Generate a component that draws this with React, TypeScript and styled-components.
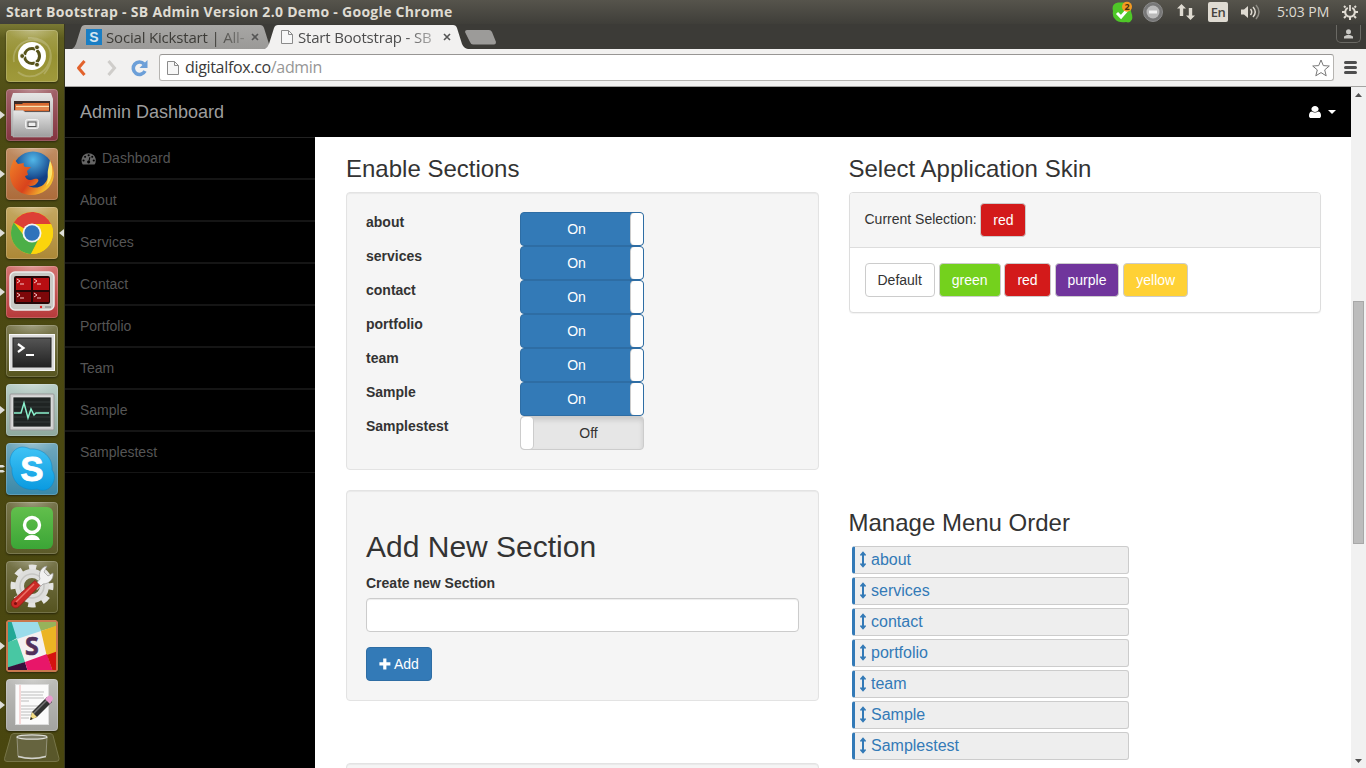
import React from 'react';
import styled, { createGlobalStyle } from 'styled-components';

const GlobalStyle = createGlobalStyle`
  *, *::before, *::after { box-sizing: border-box; }
  body {
    margin: 0;
    overflow: hidden;
    font-family: "Liberation Sans", Arial, sans-serif;
    font-size: 14px;
    line-height: 20px;
    color: #333;
  }
  svg { display: block; flex: none; }
`;

const systemFont = '"Open Sans", "Noto Sans", sans-serif';

/* ---------- desktop ---------- */

const Desktop = styled.div`
  width: 1366px;
  height: 768px;
  display: flex;
  flex-direction: column;
  overflow: hidden;
  background: #fff;
`;

const TopPanel = styled.header`
  height: 24px;
  flex: none;
  display: flex;
  align-items: center;
  justify-content: space-between;
  padding: 0 8px 0 6px;
  background: linear-gradient(#56544c, #3f3e39);
  color: #dfdbd2;
  font-family: ${systemFont};
`;

const WindowTitle = styled.div`
  font-size: 14px;
  font-weight: 700;
  letter-spacing: 0.29px;
  white-space: nowrap;
`;

const Indicators = styled.div`
  display: flex;
  align-items: center;
  height: 24px;
`;

const Indicator = styled.div<{ $left: number }>`
  margin-left: ${(p) => p.$left}px;
`;

const LanguageBadge = styled.div`
  width: 20px;
  height: 20px;
  margin-left: 13px;
  border-radius: 2px;
  background: #dfdbd2;
  color: #45443e;
  font-size: 13px;
  font-weight: 600;
  letter-spacing: -0.5px;
  line-height: 21px;
  text-align: center;
`;

const Clock = styled.div`
  width: 53px;
  margin-left: 16px;
  font-size: 14px;
  white-space: nowrap;
`;

const Workspace = styled.div`
  flex: 1;
  min-height: 0;
  display: flex;
`;

/* ---------- launcher ---------- */

const Launcher = styled.aside`
  width: 65px;
  flex: none;
  display: flex;
  flex-direction: column;
  gap: 7px;
  padding: 6px 0 0 0;
  background: linear-gradient(#7a7934 0, #5d5c1e 14px, #4c4a13 90px, #49460f 100%);
  border-right: 1px solid #37361f;
`;

const LauncherItem = styled.div`
  height: 52px;
  flex: none;
  display: flex;
  align-items: center;
`;

const Marker = styled.div`
  width: 6px;
  flex: none;
`;

const Tile = styled.div<{ $bg: string }>`
  width: 52px;
  height: 52px;
  border-radius: 4px;
  overflow: hidden;
  background: radial-gradient(ellipse 24px 12px at 50% 0, rgba(255, 255, 255, 0.28), rgba(255, 255, 255, 0)), ${(p) => p.$bg};
  box-shadow: inset 0 0 0 1px rgba(255, 255, 255, 0.18), 0 1px 2px rgba(0, 0, 0, 0.45);
`;

const Trash = styled.div`
  margin: -5px 0 0 4px;
`;

/* ---------- browser ---------- */

const Browser = styled.section`
  flex: 1;
  min-width: 0;
  display: flex;
  flex-direction: column;
`;

const TabStrip = styled.div`
  height: 25px;
  flex: none;
  display: flex;
  align-items: flex-end;
  justify-content: space-between;
  padding: 0 5px 0 7px;
  background: #3c3b37;
`;

const Tabs = styled.div`
  display: flex;
  align-items: flex-end;
`;

const Tab = styled.div<{ $active?: boolean }>`
  width: 206px;
  height: 24px;
  margin-left: ${(p) => (p.$active ? '-13px' : '0')};
  padding: 0 15px 1px ${(p) => (p.$active ? '16px' : '14px')};
  display: flex;
  align-items: center;
  z-index: ${(p) => (p.$active ? 1 : 0)};
  background: ${(p) => (p.$active ? '#f2f1f0' : 'linear-gradient(#a8a7a5, #9a9997)')};
  clip-path: path('M0 24 Q2.5 23 4 19 L9 3 Q10 0 13 0 L188 0 Q191 0 192 3 L197 19 Q199 23.5 203 24 Z');
  font-family: ${systemFont};
  font-size: 15px;
  color: ${(p) => (p.$active ? '#4c4c4c' : '#3c3b37')};
`;

const TabTitle = styled.div<{ $active?: boolean }>`
  width: 138px;
  margin-left: ${(p) => (p.$active ? 5 : 4)}px;
  overflow: hidden;
  white-space: nowrap;
  letter-spacing: -0.18px;
  mask-image: linear-gradient(90deg, #000 78%, rgba(0, 0, 0, 0.3) 100%);
`;

const TabClose = styled.div`
  margin-left: 7px;
`;

const NewTab = styled.div`
  width: 31px;
  height: 15px;
  margin: 0 0 4px -6px;
  background: #9c9b99;
  clip-path: path('M2 0 L24 0 Q26 0 27 2 L31 12 Q31 14.500 29 14.500 L8 14.500 Q6 14.500 5 12 L0 2 Q0 0 2 0 Z');
`;

const ProfileButton = styled.div`
  width: 25px;
  height: 18px;
  margin-bottom: 6px;
  display: flex;
  align-items: center;
  justify-content: center;
  border: 1px solid #6a6964;
  border-top: 0;
  border-radius: 0 0 5px 5px;
`;

const Toolbar = styled.div`
  height: 38px;
  flex: none;
  display: flex;
  align-items: center;
  padding: 0 9px 0 10px;
  background: #f2f1f0;
  border-bottom: 1px solid #a5a4a2;
`;

const NavIcon = styled.div<{ $left?: number }>`
  margin-left: ${(p) => p.$left ?? 0}px;
`;

const Omnibox = styled.div`
  flex: 1;
  height: 27px;
  margin: 0 10px 0 11px;
  padding: 0 3px 0 7px;
  display: flex;
  align-items: center;
  border: 1px solid #b6b4b1;
  border-top: 1px solid #989694;
  border-radius: 3px;
  background: #fff;
`;

const Address = styled.div`
  flex: 1;
  margin: -1px 0 0 6px;
  font-family: ${systemFont};
  font-size: 16px;
  letter-spacing: -0.33px;
  color: #3a3a3a;
  span { color: #969696; }
`;

const Viewport = styled.div`
  flex: 1;
  min-height: 0;
  display: flex;
`;

const Page = styled.div`
  flex: 1;
  min-width: 0;
  display: flex;
  flex-direction: column;
`;

const Scrollbar = styled.div`
  width: 15px;
  display: flex;
  flex-direction: column;
  align-items: center;
  justify-content: space-between;
  padding: 6px 0 5px;
  background: #f1f1f1;
`;

const ScrollTrack = styled.div`
  flex: 1;
  padding-top: 204px;
`;

const ScrollThumb = styled.div`
  width: 11px;
  height: 243px;
  background: #bcbcbc;
  border: 1px solid #a8a8a8;
`;

/* ---------- admin page ---------- */

const Navbar = styled.nav`
  height: 50px;
  flex: none;
  display: flex;
  align-items: center;
  justify-content: space-between;
  padding: 0 15px;
  background: #000;
  color: #9d9d9d;
`;

const Brand = styled.div`
  font-size: 18px;
`;

const UserMenu = styled.div`
  display: flex;
  align-items: center;
  gap: 7px;
`;

const PageBody = styled.div`
  flex: 1;
  min-height: 0;
  display: flex;
`;

const Sidebar = styled.div`
  width: 250px;
  flex: none;
  background: #000;
  border-top: 1px solid #222;
`;

const SidebarItem = styled.div`
  height: 42px;
  padding: 10px 15px;
  display: flex;
  gap: 5px;
  color: #555;
  border-bottom: 2px solid #151515;
  &:last-child {
    height: 41px;
    border-bottom-width: 1px;
  }
`;

const Main = styled.main`
  flex: 1;
  min-width: 0;
  display: grid;
  grid-template-columns: 1fr 1fr;
  column-gap: 30px;
  padding: 19px 30px 0 31px;
  overflow: hidden;
  background: #fff;
`;

const Column = styled.div`
  min-width: 0;
`;

const Heading = styled.h3`
  height: 26px;
  margin: 0 0 10px;
  font-size: 24px;
  font-weight: 400;
  line-height: 26px;
`;

const Well = styled.div<{ $gap?: number }>`
  margin-bottom: ${(p) => p.$gap ?? 20}px;
  padding: 19px;
  min-height: 40px;
  background: #f5f5f5;
  border: 1px solid #e3e3e3;
  border-radius: 4px;
  box-shadow: inset 0 1px 1px rgba(0, 0, 0, 0.05);
`;

const ToggleRow = styled.div`
  height: 34px;
  display: grid;
  grid-template-columns: 154px 124px;
`;

const Label = styled.label`
  display: block;
  font-weight: 700;
`;

const Toggle = styled.div<{ $on: boolean }>`
  height: 34px;
  display: flex;
  flex-direction: ${(p) => (p.$on ? 'row' : 'row-reverse')};
  overflow: hidden;
  border: 1px solid ${(p) => (p.$on ? '#2e6da4' : '#ccc')};
  border-radius: 4px;
  background: ${(p) => (p.$on ? '#337ab7' : '#e6e6e6')};
  color: ${(p) => (p.$on ? '#fff' : '#333')};
  box-shadow: ${(p) => (p.$on ? 'none' : 'inset 0 3px 5px rgba(0, 0, 0, 0.125)')};
`;

const ToggleText = styled.div`
  flex: 1;
  padding-left: 1px;
  line-height: 32px;
  text-align: center;
`;

const ToggleHandle = styled.div`
  width: 12px;
  background: #fff;
  border-radius: 4px;
  box-shadow: 0 0 0 1px #ccc;
`;

const FormTitle = styled.h2`
  margin: 20px 0 10px;
  font-size: 30px;
  font-weight: 400;
  line-height: 33px;
`;

const TextInput = styled.input`
  display: block;
  width: 100%;
  height: 34px;
  margin: 5px 0 15px;
  padding: 6px 12px;
  border: 1px solid #ccc;
  border-radius: 4px;
  background: #fff;
  box-shadow: inset 0 1px 1px rgba(0, 0, 0, 0.075);
`;

const Button = styled.button<{ $bg?: string; $border?: string; $color?: string }>`
  display: inline-flex;
  align-items: center;
  gap: 3px;
  height: 34px;
  padding: 0 12px;
  border: 1px solid ${(p) => p.$border ?? '#ccc'};
  border-radius: 4px;
  background: ${(p) => p.$bg ?? '#fff'};
  color: ${(p) => p.$color ?? '#fff'};
  font: 14px/20px "Liberation Sans", Arial, sans-serif;
`;

const Panel = styled.div`
  height: 121px;
  margin-bottom: 197px;
  border: 1px solid #ddd;
  border-radius: 4px;
  background: #fff;
  box-shadow: 0 1px 1px rgba(0, 0, 0, 0.05);
`;

const PanelHeader = styled.div`
  display: flex;
  gap: 3.7px;
  height: 55px;
  padding: 10px 15px;
  background: #f5f5f5;
  border-bottom: 1px solid #ddd;
  border-radius: 3px 3px 0 0;
`;

const PanelCaption = styled.span`
  line-height: 33px;
`;

const PanelBody = styled.div`
  display: flex;
  gap: 3.88px;
  padding: 15px;
`;

const OrderList = styled.div`
  display: flex;
  flex-direction: column;
  gap: 3px;
  width: 280px;
  padding-left: 3px;
`;

const OrderItem = styled.div`
  height: 28px;
  display: flex;
  align-items: center;
  gap: 5px;
  padding: 0 5px 1px 5.5px;
  border: 1px solid #ccc;
  border-left: 3px solid #337ab7;
  border-radius: 3px;
  background: #eee;
  color: #337ab7;
  font-size: 16px;
`;

/* ---------- small icons ---------- */

const PageIcon = () => (
  <svg width="12" height="16" viewBox="0 0 12 16" fill="#f7f7f7" stroke="#8b8b8b">
    <path d="M.5 1.500h7l4 4v9H.5z" />
    <path d="M7.500 1.500v4h4" fill="none" />
  </svg>
);

const CloseIcon = ({ color }: { color: string }) => (
  <svg width="8" height="8" viewBox="0 0 8 8" stroke={color} strokeWidth="1.600">
    <path d="M1 1l6 6M7 1L1 7" />
  </svg>
);

const OrderIcon = () => (
  <svg width="6" height="17" viewBox="0 0 6 17" fill="#337ab7">
    <path d="M3 .3L6 3.700V4.600H4V12.400H6V13.300L3 16.700L0 13.300V12.400H2V4.600H0V3.700z" />
  </svg>
);

const DashboardIcon = () => (
  <svg width="17" height="20" viewBox="-190 -405 2130 2506" fill="#666">
    <path d="M384 1152q0-53-37.500-90.500t-90.500-37.500-90.500 37.500-37.500 90.500 37.500 90.500 90.500 37.500 90.500-37.500 37.500-90.500zm192-448q0-53-37.500-90.500t-90.500-37.500-90.500 37.500-37.500 90.500 37.500 90.500 90.500 37.500 90.500-37.500 37.500-90.500zm428 481l101-382q6-26-7.500-48.500t-38.500-29.500-48 6.500-30 39.500l-101 382q-60 5-107 43.500t-63 98.500q-20 77 20 146t117 89 146-20 89-117q16-60-6-117t-72-91zm660-33q0-53-37.500-90.500t-90.500-37.500-90.500 37.500-37.500 90.500 37.500 90.500 90.500 37.500 90.500-37.500 37.500-90.500zm-640-640q0-53-37.500-90.500t-90.500-37.500-90.500 37.500-37.500 90.500 37.500 90.500 90.500 37.500 90.500-37.500 37.500-90.500zm448 192q0-53-37.500-90.500t-90.500-37.500-90.500 37.500-37.500 90.500 37.500 90.500 90.500 37.500 90.500-37.500 37.500-90.500zm320 448q0 261-141 483-19 29-54 29h-1402q-35 0-54-29-141-221-141-483 0-182 71-348t191-286 286-191 348-71 348 71 286 191 191 286 71 348z" />
  </svg>
);

const UserIcon = () => (
  <svg width="12" height="12" viewBox="256 128 1280 1536" preserveAspectRatio="none" fill="#fff">
    <path d="M1536 1399q0 109-62.500 187t-150.500 78h-854q-88 0-150.500-78t-62.500-187q0-85 8.500-160.500t31.500-152 58.500-131 94-89 134.500-34.500q131 128 313 128t313-128q76 0 134.500 34.500t94 89 58.500 131 31.500 152 8.500 160.500zm-256-887q0 159-112.500 271.500t-271.500 112.500-271.500-112.500-112.500-271.500 112.500-271.500 271.500-112.500 271.500 112.500 112.500 271.500z" />
  </svg>
);

/* ---------- launcher icons ---------- */

const UbuntuIcon = () => (
  <svg width="52" height="52" viewBox="0 0 52 52" fill="none">
    <path d="M8 32C5 14 26 2 42 16M12 42C26 54 48 40 44 20M22 8C44 6 52 28 38 44" stroke="#fff" strokeOpacity=".2" strokeWidth="1.800" />
    <circle cx="26" cy="26" r="14" fill="#fff" />
    <circle cx="26" cy="26" r="7.500" stroke="#57531a" strokeWidth="3" strokeDasharray="14.200 1.500" strokeDashoffset="7" />
    <g fill="#57531a" stroke="#fff" strokeWidth=".8">
      <circle cx="16.200" cy="26" r="2.400" /><circle cx="31" cy="17.300" r="2.400" /><circle cx="31" cy="34.700" r="2.400" />
    </g>
  </svg>
);

const FilesIcon = () => (
  <svg width="52" height="52" viewBox="0 0 52 52">
    <defs>
      <linearGradient id="steel" x2="0" y2="1"><stop stopColor="#e6e6e6" /><stop offset="1" stopColor="#9e9e9e" /></linearGradient>
    </defs>
    <path d="M7 4h38l2 6v37H5V10z" fill="url(#steel)" />
    <rect x="8" y="12" width="36" height="11" fill="#3b2c28" />
    <path d="M9 15l7 0 1-1h26v8H9z" fill="#d9692f" />
    <path d="M10 17.500h33" stroke="#fbe3b2" strokeWidth="1.400" />
    <path d="M10 20h33" stroke="#f0a672" />
    <path d="M7 21.500h10l2 1.500h26v25H7z" fill="url(#steel)" stroke="#bdbdbd" strokeWidth=".6" />
    <rect x="19.500" y="30.500" width="13" height="9" rx="2" fill="#d5d5d5" stroke="#f1f1f1" />
    <rect x="22" y="33" width="8" height="4.500" fill="#eee" stroke="#555" />
  </svg>
);

const FirefoxIcon = () => (
  <svg width="52" height="52" viewBox="0 0 52 52">
    <defs>
      <radialGradient id="globe" cx=".5" cy=".2"><stop stopColor="#52b7e8" /><stop offset="1" stopColor="#123f86" /></radialGradient>
      <linearGradient id="fox" x2="1" y2=".6"><stop stopColor="#f08128" /><stop offset=".6" stopColor="#d9431c" /><stop offset="1" stopColor="#f7c931" /></linearGradient>
    </defs>
    <circle cx="27" cy="24" r="20.500" fill="url(#globe)" />
    <path d="M45 13c5 10 4 22-5 29-10 8-25 6-32-3C3 32 3 22 6 16l2-5 4 5 6-1c-1 2 0 3 1 4h6l-4 4 1 4-3 1c1 4 5 5 9 3 4-1 6 1 3 4-2 3-7 4-10 2 9 6 19 1 21-8 2-6 1-9 4-16z" fill="url(#fox)" />
    <path d="M44 12c4 8 3 20-4 26 3-7 1-11 2-16z" fill="#fce46a" />
  </svg>
);

const ChromeIcon = () => (
  <svg width="52" height="52" viewBox="0 0 52 52">
    <circle cx="26" cy="26" r="21" fill="#f9d109" />
    <path d="M26 26L7.800 15.500A21 21 0 0 1 45.500 18H26z" fill="#dd3f36" />
    <path d="M25 46.900A21 21 0 0 1 7.800 15.500L19 30l13.500 2z" fill="#4caf47" />
    <path d="M26 17h19.100a21 21 0 0 1-20.100 29.900L34 31z" fill="#fbd40c" />
    <circle cx="26" cy="26" r="9.500" fill="#f4f4f4" />
    <circle cx="26" cy="26" r="7.700" fill="#2f73bb" />
  </svg>
);

const TerminatorIcon = () => (
  <svg width="52" height="52" viewBox="0 0 52 52">
    <rect x="4" y="6" width="44" height="38" rx="5" fill="#c9c9c5" stroke="#ececec" strokeWidth="1.500" />
    <rect x="8" y="10" width="36" height="28" rx="2" fill="#250607" />
    <g fill="#b80e12"><rect x="10" y="12" width="15" height="12" /><rect x="27" y="12" width="16" height="12" /></g>
    <g fill="#7d0709"><rect x="10" y="26" width="15" height="10" /><rect x="27" y="26" width="16" height="10" /></g>
    <path d="M11 13l3 2-3 2M14 18h4M28 13l3 2-3 2M31 18h4M11 27l3 2-3 2M14 32h4M28 27l3 2-3 2M31 32h4" fill="none" stroke="#f6c5c5" />
    <circle cx="35" cy="41" r="1.200" fill="#e02020" /><path d="M39 41h6" stroke="#777" />
  </svg>
);

const TerminalIcon = () => (
  <svg width="52" height="52" viewBox="0 0 52 52">
    <defs><linearGradient id="term" x2="0" y2="1"><stop stopColor="#555" /><stop offset="1" stopColor="#222" /></linearGradient></defs>
    <rect x="3.500" y="9.500" width="45" height="36" fill="#ddd" stroke="#f8f8f8" />
    <rect x="7" y="13" width="38" height="29" fill="url(#term)" stroke="#222" />
    <path d="M12 19l5.500 4-5.500 4" fill="none" stroke="#fff" strokeWidth="2.200" /><path d="M20 30h8" stroke="#fff" strokeWidth="1.800" />
  </svg>
);

const MonitorIcon = () => (
  <svg width="52" height="52" viewBox="0 0 52 52">
    <rect x="4" y="10" width="44" height="36" rx="1" fill="#cfcfcf" stroke="#999" />
    <rect x="7" y="13" width="38" height="30" fill="#1f2423" stroke="#eee" strokeWidth=".7" />
    <path d="M8 18h36M8 23h36M8 28h36M8 33h36M8 38h36" stroke="#353b3a" />
    <path d="M8 29h7l3-10 4 15 3-9 3 6 2-2h13" fill="none" stroke="#8af0cc" strokeWidth="1.500" />
  </svg>
);

const SkypeIcon = () => (
  <svg width="52" height="52" viewBox="0 0 52 52">
    <defs><linearGradient id="sky" x2="0" y2="1"><stop stopColor="#3fc3f5" /><stop offset="1" stopColor="#0a9ae0" /></linearGradient></defs>
    <path d="M16 4c4 0 6 1 8 2 12-1 23 8 22 21 3 4 3 9 1 13-3 7-10 9-16 6C17 49 5 39 6 25 1 17 6 5 16 4z" fill="url(#sky)" stroke="#0b86c8" strokeWidth=".5" />
    <text x="26" y="38" textAnchor="middle" fontFamily="Liberation Sans, sans-serif" fontWeight="700" fontSize="35" fill="#fff" stroke="#fff" strokeWidth=".8">S</text>
  </svg>
);

const UpworkIcon = () => (
  <svg width="52" height="52" viewBox="0 0 52 52" fill="none">
    <defs><linearGradient id="grn" x2="0" y2="1"><stop stopColor="#62bf4c" /><stop offset="1" stopColor="#3ba536" /></linearGradient></defs>
    <rect x="5" y="5" width="42" height="42" rx="6" fill="url(#grn)" />
    <circle cx="26" cy="23" r="7.500" stroke="#fff" strokeWidth="3.400" />
    <path d="M18 38q2-5 8-5t8 5z" fill="#fff" />
  </svg>
);

const SettingsIcon = () => (
  <svg width="52" height="52" viewBox="0 0 52 52">
    <circle cx="26" cy="25" r="18" fill="none" stroke="#e4e4e2" strokeWidth="7" strokeDasharray="7.070 7.070" strokeDashoffset="3.500" />
    <circle cx="26" cy="25" r="12.500" fill="none" stroke="#dededc" strokeWidth="9" />
    <circle cx="26" cy="25" r="12" fill="none" stroke="#c6c6c3" strokeWidth="1.500" />
    <path d="M28 25l6-7c-2-6 1-12 7-13l-3 6 4 4 5-3c1 6-4 11-10 11l-6 6z" fill="#f1f1f1" stroke="#999" strokeWidth=".7" />
    <path d="M29 19.500l5 5L13 45.500a4.300 4.300 0 0 1-6.500-6z" fill="#cc2a26" stroke="#8f1715" strokeWidth=".7" />
    <path d="M28 23L10 41" stroke="#ed7268" strokeWidth="1.500" />
    <circle cx="9.500" cy="42.500" r="1.500" fill="#7d0f0f" />
  </svg>
);

const SlackIcon = () => (
  <svg width="52" height="52" viewBox="0 0 52 52">
    <rect width="52" height="52" fill="#c9784e" />
    <svg x="2" y="2" width="48" height="48" viewBox="2 2 48 48">
      <rect width="52" height="52" fill="#f5f0f0" />
      <path d="M0 0h7l4 18-11 6z" fill="#22a795" /><path d="M5 0h27l3 11-24 8z" fill="#9bdcea" />
      <path d="M31 0h21v6L35 11z" fill="#97b25b" /><path d="M35 11l17-6v29l-11 3z" fill="#ebb424" />
      <path d="M0 23l11-4 8 23-19 7z" fill="#48c7a3" /><path d="M0 48l19-6 3 10H0z" fill="#380f3c" />
      <path d="M19 42l22-8 6 18H22z" fill="#e81669" /><path d="M41 35l11-4v21h-5z" fill="#d5120f" />
    </svg>
    <text x="26" y="35" textAnchor="middle" fontFamily="Noto Sans, sans-serif" fontWeight="700" fontSize="25" fill="#52305a" stroke="#52305a" strokeWidth=".6">S</text>
  </svg>
);

const EditorIcon = () => (
  <svg width="52" height="52" viewBox="0 0 52 52">
    <rect x="9.500" y="5.500" width="33" height="40" fill="#fbfbfb" stroke="#ddd" />
    <path d="M14 6v39" stroke="#f1b7b7" />
    <path d="M15 13h23M15 16h22M15 19h23M15 22h8M15 27h22M15 30h18M15 33h16M15 36h12M15 39h8" stroke="#b5b5b5" strokeWidth=".9" />
    <path d="M24 41l2-8 15-15 5 5-15 15z" fill="#333" />
    <path d="M27 35l15-15" stroke="#777" strokeWidth="1.500" />
    <path d="M24 41l2-8 5 5z" fill="#f3dc83" /><path d="M24 41l1-3 2 2z" fill="#222" />
    <path d="M39 20l3-3q4-2 5 3l-3 5z" fill="#e99bd0" />
  </svg>
);

const TrashIcon = () => (
  <svg width="56" height="29" viewBox="0 0 56 29" fill="none">
    <path d="M10 .5h36q2 0 3 2l6 23q.5 3-3 3H3q-3 0-2.500-3L7 2.500q1-2 3-2z" fill="#59572a" stroke="#777548" />
    <path d="M13 4l1 19q14 4 28 0l1-19" fill="#66643f" stroke="#94937a" />
    <ellipse cx="28" cy="4" rx="15" ry="2.200" fill="#7d7c66" stroke="#e0e0da" strokeWidth="1.200" />
    <path d="M14 23.500q14 4 28 0" stroke="#d2d2cb" strokeWidth="1.600" />
  </svg>
);

type App = { icon: React.ReactNode; bg: string; mark?: 'one' | 'two'; focused?: boolean };

const apps: App[] = [
  { icon: <UbuntuIcon />, bg: 'linear-gradient(#a5a04f, #969132 50%, #a09a3b)' },
  { icon: <FilesIcon />, bg: 'linear-gradient(#a2636a, #843440)', mark: 'one' },
  { icon: <FirefoxIcon />, bg: 'linear-gradient(#c08d63, #ac6b3a)', mark: 'one' },
  { icon: <ChromeIcon />, bg: 'linear-gradient(#c4a861, #ac8836)', mark: 'one', focused: true },
  { icon: <TerminatorIcon />, bg: 'linear-gradient(#d37370, #b63a3b)', mark: 'one' },
  { icon: <TerminalIcon />, bg: 'linear-gradient(#7d7b52, #57551f)' },
  { icon: <MonitorIcon />, bg: 'linear-gradient(#b9cec7, #8fa99f)', mark: 'one' },
  { icon: <SkypeIcon />, bg: 'linear-gradient(#72a9bd, #3988a8)', mark: 'two' },
  { icon: <UpworkIcon />, bg: 'linear-gradient(#77754b, #5c5a29)' },
  { icon: <SettingsIcon />, bg: 'linear-gradient(#77754b, #55531f)' },
  { icon: <SlackIcon />, bg: '#c9784e', mark: 'one' },
  { icon: <EditorIcon />, bg: 'linear-gradient(#bdbdba, #a3a3a0)', mark: 'one' },
];

const LeftMark = ({ kind }: { kind?: 'one' | 'two' }) => (
  <svg width="6" height="10" viewBox="0 0 6 10" fill="#deded8">
    {kind === 'one' && <path d="M0 1L5 5L0 9z" />}
    {kind === 'two' && <path d="M0 1h3l2 1.500-2 1H0zM0 6h3l2 1.500-2 1H0z" />}
  </svg>
);

const sections = ['about', 'services', 'contact', 'portfolio', 'team', 'Sample', 'Samplestest'];
const menu = ['Dashboard', 'About', 'Services', 'Contact', 'Portfolio', 'Team', 'Sample', 'Samplestest'];
const skins = [
  { name: 'Default', bg: '#fff', color: '#333' },
  { name: 'green', bg: '#74d11d' },
  { name: 'red', bg: '#d31a1a' },
  { name: 'purple', bg: '#70359c' },
  { name: 'yellow', bg: '#ffd135' },
];

export default function App() {
  return (
    <Desktop>
      <GlobalStyle />
      <TopPanel>
        <WindowTitle>Start Bootstrap - SB Admin Version 2.0 Demo - Google Chrome</WindowTitle>
        <Indicators>
          <Indicator $left={0}>
            <svg width="22" height="22" viewBox="0 0 22 22">
              <path d="M7 1.500h9q4 2 4 9 2 5 1 8-2 4-6 2.500-8 1-11-3-3-3-2-8-2-7 5-8.500z" fill="#4fc728" />
              <path d="M6 12l4 4 7-8" fill="none" stroke="#fff" strokeWidth="3" />
              <circle cx="16" cy="5.800" r="5" fill="#f39a22" />
              <text x="16" y="9" textAnchor="middle" fontSize="9" fontWeight="700" fill="#49310d">2</text>
            </svg>
          </Indicator>
          <Indicator $left={10}>
            <svg width="20" height="20" viewBox="0 0 20 20">
              <circle cx="10" cy="10" r="9.500" fill="#777" stroke="#8b8b8b" />
              <circle cx="10" cy="10" r="6.500" fill="#b9b9b9" /><path d="M6 10h8" stroke="#f1f1f1" strokeWidth="3" />
            </svg>
          </Indicator>
          <Indicator $left={14}>
            <svg width="18" height="16" viewBox="0 0 18 16" fill="#dfdbd2">
              <path d="M4.500 0L9 4.500H6.200V12H2.800V4.500H0zM13.500 16L9 11.500h2.800V4h3.400v7.500H18z" />
            </svg>
          </Indicator>
          <LanguageBadge>En</LanguageBadge>
          <Indicator $left={13}>
            <svg width="20" height="16" viewBox="0 0 20 16" fill="none" strokeWidth="1.500">
              <path d="M0 5.500h3L7 2v12l-4-3.500H0z" fill="#dfdbd2" />
              <path d="M9.500 5q2.500 3 0 6" stroke="#dfdbd2" /><path d="M12 3q4.500 5 0 10" stroke="#dfdbd2" /><path d="M15 1q6 7 0 14" stroke="#8d8b84" />
            </svg>
          </Indicator>
          <Clock>5:03 PM</Clock>
          <Indicator $left={12}>
            <svg width="16" height="16" viewBox="0 0 16 16" fill="none" stroke="#dfdbd2">
              <path d="M5.800 3.800a4.800 4.800 0 1 0 4.400 0" strokeWidth="2" /><path d="M8 1v6" strokeWidth="1.800" />
              <path d="M3.500 3.500L2 2M12.500 3.500L14 2M3 8H0M16 8h-3M4 12l-2 2M12 12l2 2M8 13v3" strokeWidth="2" />
            </svg>
          </Indicator>
        </Indicators>
      </TopPanel>

      <Workspace>
        <Launcher>
          {apps.map((app, i) => (
            <LauncherItem key={i}>
              <Marker><LeftMark kind={app.mark} /></Marker>
              <Tile $bg={app.bg}>{app.icon}</Tile>
              {app.focused && (
                <svg width="6" height="10" viewBox="0 0 6 10" fill="#deded8"><path d="M6 1L1 5l5 4z" /></svg>
              )}
            </LauncherItem>
          ))}
          <Trash><TrashIcon /></Trash>
        </Launcher>

        <Browser>
          <TabStrip>
            <Tabs>
              <Tab>
                <svg width="16" height="16" viewBox="0 0 16 16">
                  <rect width="16" height="16" fill="#1a7ec4" />
                  <text x="8" y="13" textAnchor="middle" fontFamily="Liberation Sans" fontSize="14" fontWeight="700" fill="#d6e6f1">S</text>
                </svg>
                <TabTitle>Social Kickstart | All-</TabTitle>
                <TabClose><CloseIcon color="#555" /></TabClose>
              </Tab>
              <Tab $active>
                <PageIcon />
                <TabTitle $active>Start Bootstrap - SB</TabTitle>
                <TabClose><CloseIcon color="#555" /></TabClose>
              </Tab>
              <NewTab />
            </Tabs>
            <ProfileButton>
              <svg width="11" height="10" viewBox="0 0 11 10" fill="#c9c8c4"><circle cx="5.500" cy="2.800" r="2.500" /><path d="M1 9.500V7.500Q5.500 4 10 7.500v2z" /></svg>
            </ProfileButton>
          </TabStrip>

          <Toolbar>
            <NavIcon>
              <svg width="12" height="18" viewBox="0 0 12 18" fill="none" stroke="#e2622c" strokeWidth="3" strokeLinejoin="round"><path d="M9.500 2L3.500 9l6 7" /></svg>
            </NavIcon>
            <NavIcon $left={19}>
              <svg width="12" height="18" viewBox="0 0 12 18" fill="none" stroke="#cfcdca" strokeWidth="3"><path d="M2.500 2l6 7-6 7" /></svg>
            </NavIcon>
            <NavIcon $left={13}>
              <svg width="17" height="18" viewBox="0 0 17 18" fill="none"><path d="M14 12A6.200 6.200 0 1 1 13 5" stroke="#6c9fd8" strokeWidth="3.600" /><path d="M16.500 1v8H8.500z" fill="#6c9fd8" /></svg>
            </NavIcon>
            <Omnibox>
              <PageIcon />
              <Address>digitalfox.co<span>/admin</span></Address>
              <svg width="18" height="18" viewBox="0 0 18 18" fill="#fff" stroke="#777" strokeLinejoin="round"><path d="M9 1l2.300 5.600 6 .4-4.600 3.900 1.500 5.900L9 13.600l-5.200 3.200 1.500-5.900L.7 7l6-.4z" /></svg>
            </Omnibox>
            <svg width="13" height="13" viewBox="0 0 13 13" stroke="#4e4e4e" strokeWidth="3" strokeLinecap="round"><path d="M1.500 1.500h10M1.500 6.500h10M1.500 11.500h10" /></svg>
          </Toolbar>

          <Viewport>
            <Page>
              <Navbar>
                <Brand>Admin Dashboard</Brand>
                <UserMenu>
                  <UserIcon />
                  <svg width="8" height="4" viewBox="0 0 8 4" fill="#fff"><path d="M0 0h8L4 4z" /></svg>
                </UserMenu>
              </Navbar>
              <PageBody>
                <Sidebar>
                  {menu.map((item) => (
                    <SidebarItem key={item}>
                      {item === 'Dashboard' && <DashboardIcon />}
                      {item}
                    </SidebarItem>
                  ))}
                </Sidebar>
                <Main>
                  <Column>
                    <Heading>Enable Sections</Heading>
                    <Well>
                      {sections.map((name) => {
                        const on = name !== 'Samplestest';
                        return (
                          <ToggleRow key={name}>
                            <Label>{name}</Label>
                            <Toggle $on={on}>
                              <ToggleText>{on ? 'On' : 'Off'}</ToggleText>
                              <ToggleHandle />
                            </Toggle>
                          </ToggleRow>
                        );
                      })}
                    </Well>
                    <Well $gap={62}>
                      <FormTitle>Add New Section</FormTitle>
                      <Label>Create new Section</Label>
                      <TextInput />
                      <Button $bg="#337ab7" $border="#2e6da4">
                        <svg width="12" height="12" viewBox="0 0 12 12" fill="#fff"><path d="M4.200.5h3.200v3.700h4v3.300h-4v4H4.200v-4H.4V4.200h3.800z" /></svg>
                        Add
                      </Button>
                    </Well>
                    <Well />
                  </Column>
                  <Column>
                    <Heading>Select Application Skin</Heading>
                    <Panel>
                      <PanelHeader>
                        <PanelCaption>Current Selection:</PanelCaption>
                        <Button $bg="#d31a1a">red</Button>
                      </PanelHeader>
                      <PanelBody>
                        {skins.map((s) => (
                          <Button key={s.name} $bg={s.bg} $color={s.color}>{s.name}</Button>
                        ))}
                      </PanelBody>
                    </Panel>
                    <Heading>Manage Menu Order</Heading>
                    <OrderList>
                      {sections.map((name) => (
                        <OrderItem key={name}><OrderIcon />{name}</OrderItem>
                      ))}
                    </OrderList>
                  </Column>
                </Main>
              </PageBody>
            </Page>
            <Scrollbar>
              <svg width="7" height="4" viewBox="0 0 7 4" fill="#505050"><path d="M0 4h7L3.500 0z" /></svg>
              <ScrollTrack><ScrollThumb /></ScrollTrack>
              <svg width="7" height="4" viewBox="0 0 7 4" fill="#505050"><path d="M0 0h7L3.500 4z" /></svg>
            </Scrollbar>
          </Viewport>
        </Browser>
      </Workspace>
    </Desktop>
  );
}
